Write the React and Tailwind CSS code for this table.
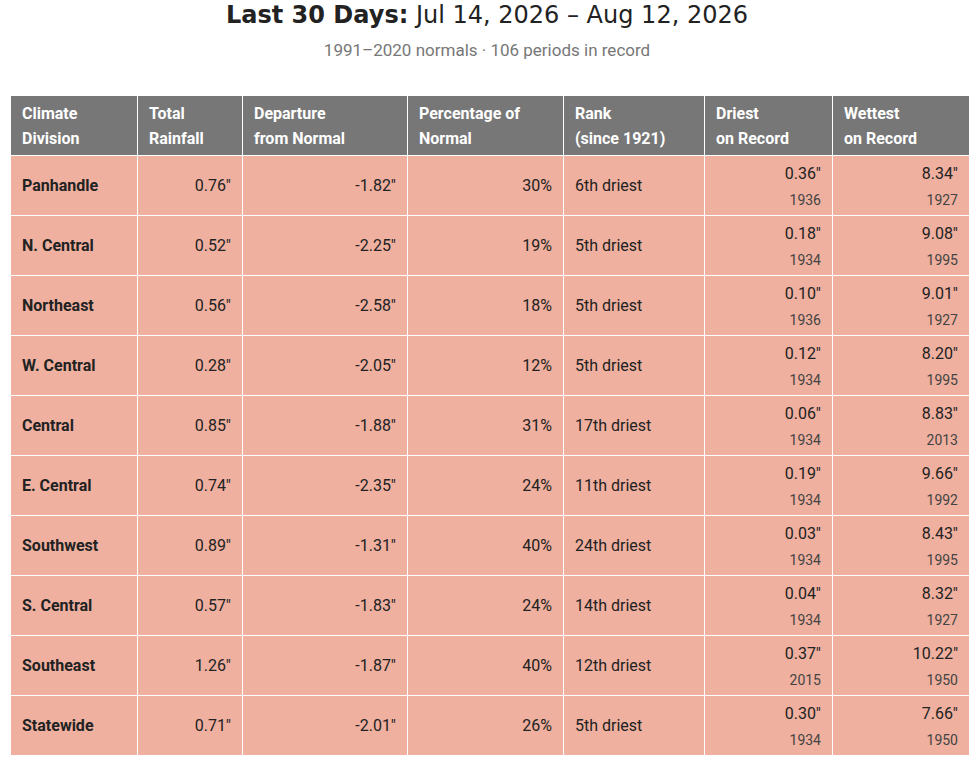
const ROWS = [
  ['Panhandle', '0.76"', '-1.82"', '30%', '6th driest', '0.36"', '1936', '8.34"', '1927'],
  ['N. Central', '0.52"', '-2.25"', '19%', '5th driest', '0.18"', '1934', '9.08"', '1995'],
  ['Northeast', '0.56"', '-2.58"', '18%', '5th driest', '0.10"', '1936', '9.01"', '1927'],
  ['W. Central', '0.28"', '-2.05"', '12%', '5th driest', '0.12"', '1934', '8.20"', '1995'],
  ['Central', '0.85"', '-1.88"', '31%', '17th driest', '0.06"', '1934', '8.83"', '2013'],
  ['E. Central', '0.74"', '-2.35"', '24%', '11th driest', '0.19"', '1934', '9.66"', '1992'],
  ['Southwest', '0.89"', '-1.31"', '40%', '24th driest', '0.03"', '1934', '8.43"', '1995'],
  ['S. Central', '0.57"', '-1.83"', '24%', '14th driest', '0.04"', '1934', '8.32"', '1927'],
  ['Southeast', '1.26"', '-1.87"', '40%', '12th driest', '0.37"', '2015', '10.22"', '1950'],
  ['Statewide', '0.71"', '-2.01"', '26%', '5th driest', '0.30"', '1934', '7.66"', '1950'],
];

const HEADERS = [
  ['Climate', 'Division'],
  ['Total', 'Rainfall'],
  ['Departure', 'from Normal'],
  ['Percentage of', 'Normal'],
  ['Rank', '(since 1921)'],
  ['Driest', 'on Record'],
  ['Wettest', 'on Record'],
];

const cell = 'bg-[#efb09f] h-[59px] px-[11px] flex items-center text-[#222]';

function Record({ value, year }) {
  return (
    <div className={`${cell} flex-col justify-center items-end pt-[2px]`}>
      <span className="leading-[26px]">{value}</span>
      <span className="text-sm leading-[26px] text-[#444]">{year}</span>
    </div>
  );
}

export default function App() {
  return (
    <div className="bg-white min-h-[762px] w-[974px] font-['Roboto',sans-serif]">
      <div className="text-center">
        <h1 className="text-[24px] leading-[30px] text-[#222] font-['DejaVu_Sans',sans-serif]">
          <span className="font-bold">Last 30 Days:</span> Jul 14, 2026 – Aug 12, 2026
        </h1>
        <p className="mt-[8px] text-[17px] leading-6 text-[#777]">1991–2020 normals · 106 periods in record</p>
      </div>

      <div className="ml-[11px] mt-[34px] w-[958px] grid grid-cols-[126px_104px_164px_155px_140px_127px_136px] gap-px bg-white text-base">
        {HEADERS.map(([a, b]) => (
          <div key={a} className="bg-[#777777] h-[59px] px-[11px] flex flex-col justify-center text-white font-bold leading-[25px]">
            <span>{a}</span>
            <span>{b}</span>
          </div>
        ))}
        {ROWS.map(r => (
          <div key={r[0]} className="contents">
            <div className={`${cell} font-bold`}>{r[0]}</div>
            <div className={`${cell} justify-end`}>{r[1]}</div>
            <div className={`${cell} justify-end`}>{r[2]}</div>
            <div className={`${cell} justify-end`}>{r[3]}</div>
            <div className={cell}>{r[4]}</div>
            <Record value={r[5]} year={r[6]} />
            <Record value={r[7]} year={r[8]} />
          </div>
        ))}
      </div>
    </div>
  );
}
